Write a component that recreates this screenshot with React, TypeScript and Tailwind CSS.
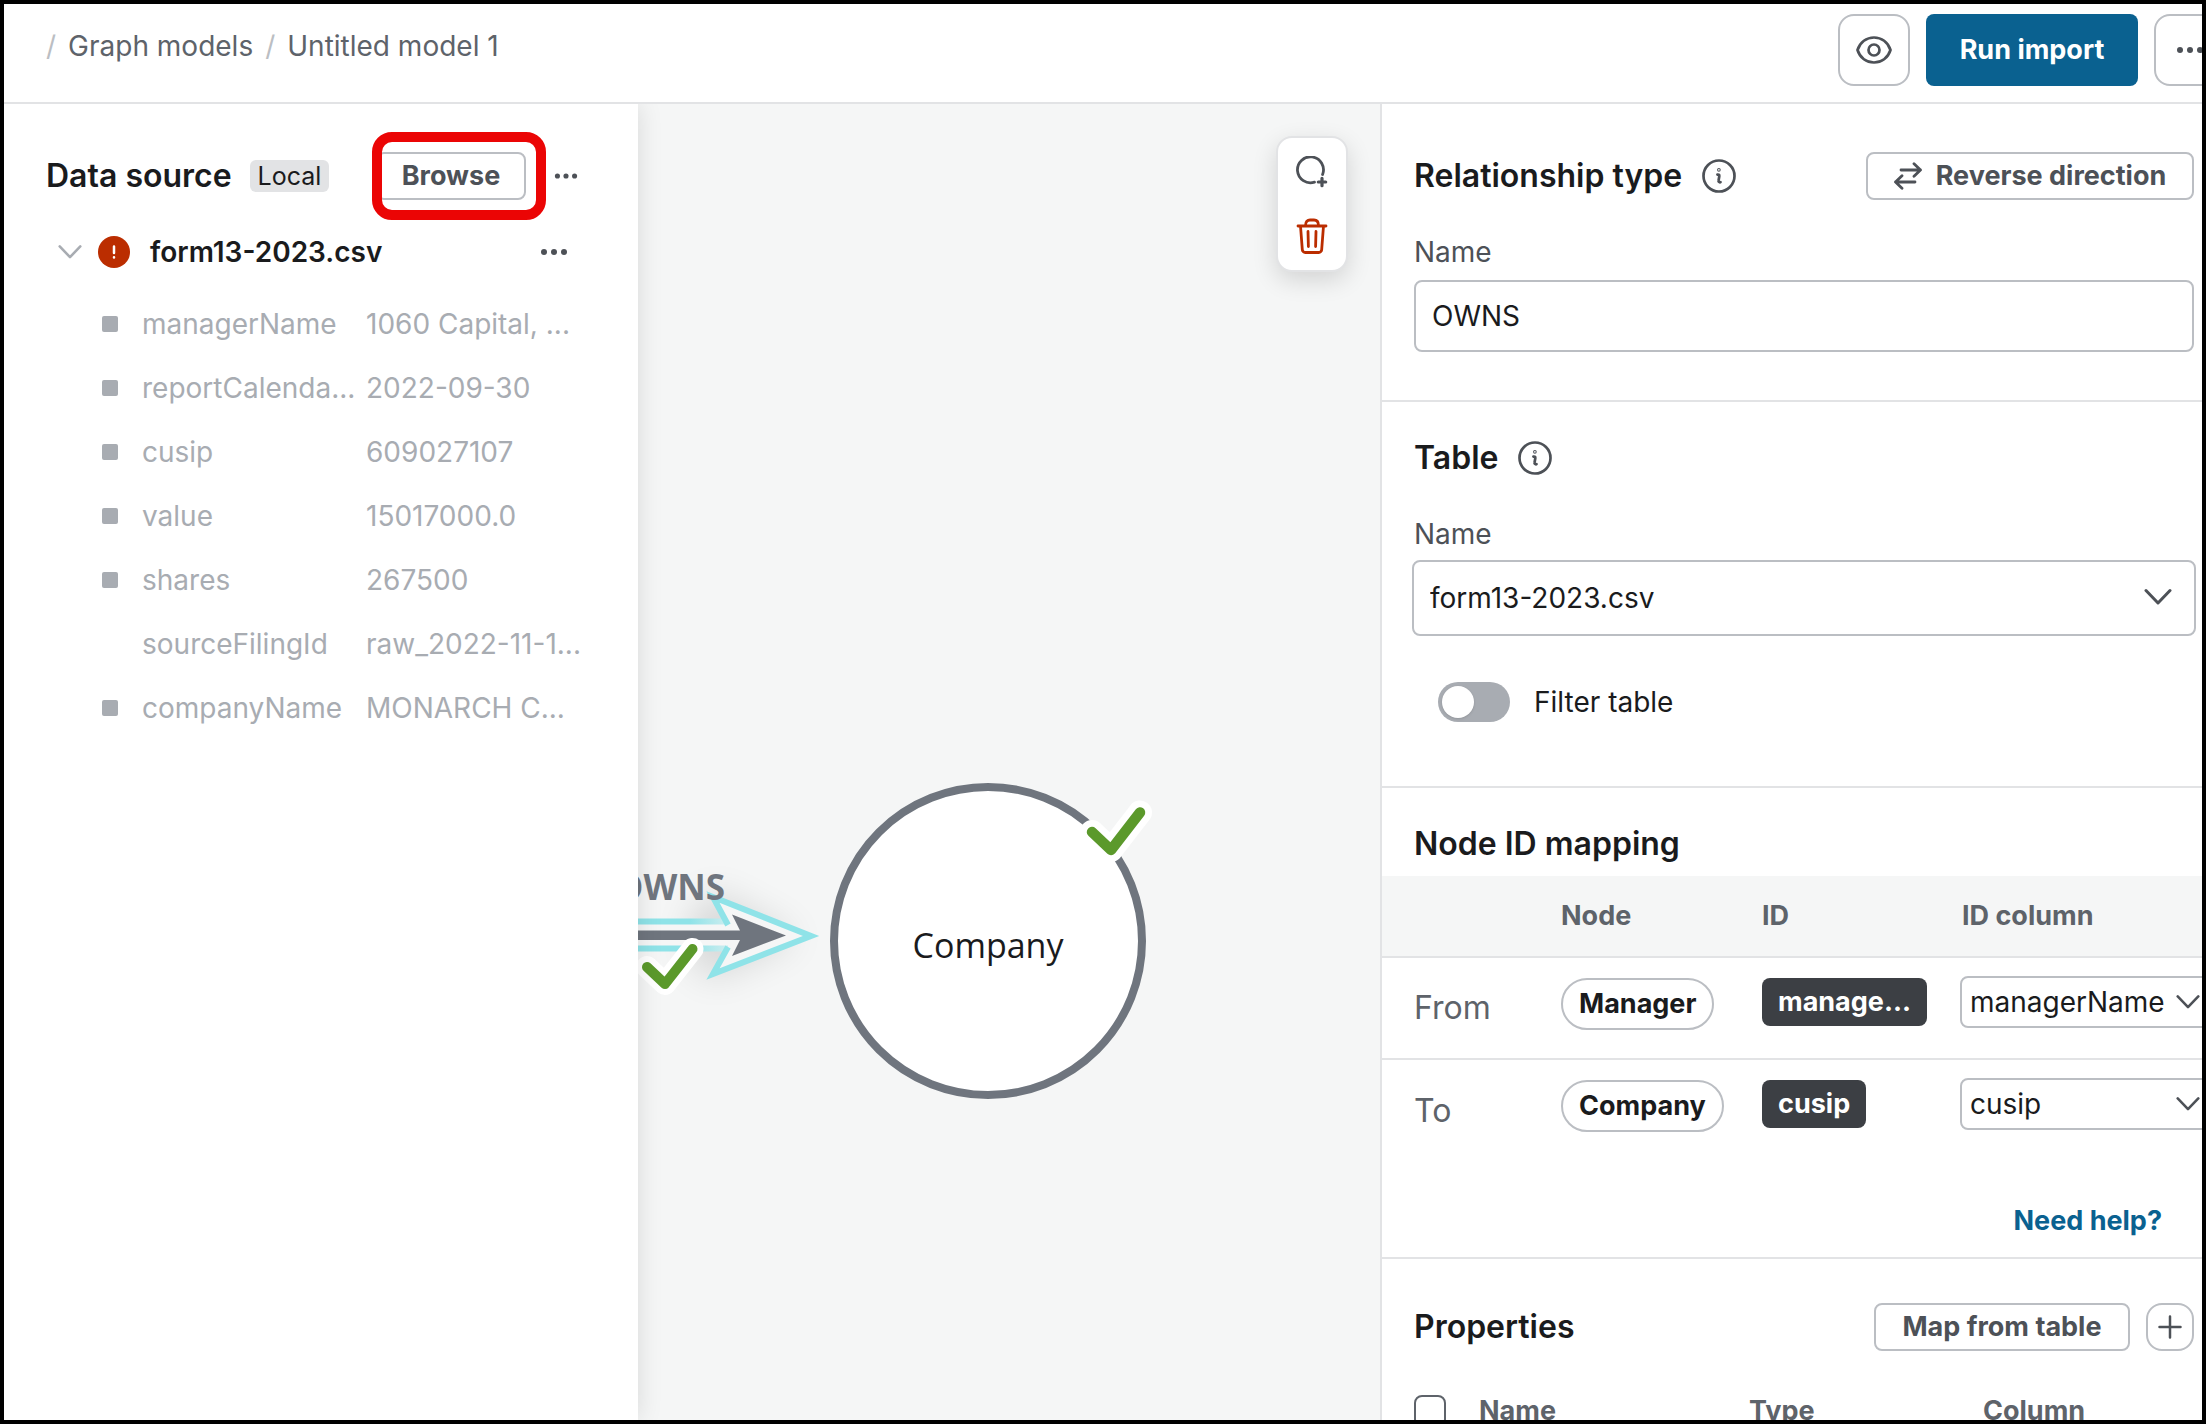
import React from "react";

const columns = [
  { name: "managerName", value: "1060 Capital, ...", mapped: true },
  { name: "reportCalenda...", value: "2022-09-30", mapped: true },
  { name: "cusip", value: "609027107", mapped: true },
  { name: "value", value: "15017000.0", mapped: true },
  { name: "shares", value: "267500", mapped: true },
  { name: "sourceFilingId", value: "raw_2022-11-1...", mapped: false },
  { name: "companyName", value: "MONARCH C...", mapped: true },
];

const mappings = [
  { end: "From", node: "Manager", id: "manage...", column: "managerName" },
  { end: "To", node: "Company", id: "cusip", column: "cusip" },
];

function Dots({ className }: { className: string }) {
  return (
    <svg viewBox="0 0 28 8" className={className} fill="currentColor" aria-hidden="true">
      <circle cx="4" cy="4" r="3" />
      <circle cx="14" cy="4" r="3" />
      <circle cx="24" cy="4" r="3" />
    </svg>
  );
}

function Chevron({ className }: { className: string }) {
  return (
    <svg viewBox="0 0 28 18" className={className} fill="none" stroke="currentColor" strokeWidth="3" strokeLinecap="round" strokeLinejoin="round" aria-hidden="true">
      <path d="M2 2.500l12 12.500 12-12.500" />
    </svg>
  );
}

function InfoButton({ label }: { label: string }) {
  return (
    <button type="button" aria-label={label} className="text-[#4d5157]">
      <svg viewBox="0 0 34 34" className="size-[34px]" fill="none" stroke="currentColor" strokeWidth="2.700" strokeLinecap="round" strokeLinejoin="round" aria-hidden="true">
        <circle cx="17" cy="17" r="15.500" />
        <path d="M15.400 15.600c1.500-.3 2.100.4 1.900 1.600l-.7 4c-.3 1.500.5 2.400 1.900 2" />
        <circle cx="16.900" cy="10.800" r="0.500" />
      </svg>
    </button>
  );
}

function Header() {
  return (
    <header className="relative z-20 flex h-[100px] shrink-0 items-start justify-between border-b-2 border-[#e2e3e5] bg-white pt-2.5">
      <nav aria-label="Breadcrumb" className="flex gap-3 pt-3 pl-[42px] text-[28px] leading-10 text-[#5e636a]">
        <span className="text-[#bbbec3]">/</span>
        <a href="#models">Graph models</a>
        <span className="text-[#bbbec3]">/</span>
        <a href="#model">Untitled model 1</a>
      </nav>
      <div className="-mr-6 flex gap-4">
        <button type="button" aria-label="Preview" className="flex size-[72px] items-center justify-center rounded-2xl border-2 border-[#bbbec3] text-[#4d5157]">
          <svg viewBox="0 0 36 28" className="h-7 w-9" fill="none" stroke="currentColor" strokeWidth="2.700" strokeLinejoin="round" aria-hidden="true">
            <path d="M1.500 14C4 6 10.500 1.500 18 1.500S32 6 34.500 14C32 22 25.500 26.500 18 26.500S4 22 1.500 14z" />
            <circle cx="18" cy="14" r="5.500" />
          </svg>
        </button>
        <button type="button" className="h-[72px] w-[212px] rounded-lg bg-[#0a6190] text-[27px] font-bold text-white">
          Run import
        </button>
        <button type="button" aria-label="More actions" className="flex size-[72px] items-center justify-center rounded-2xl border-2 border-[#bbbec3] text-[#4d5157]">
          <Dots className="h-2 w-7" />
        </button>
      </div>
    </header>
  );
}

function DataSource() {
  return (
    <aside className="z-10 w-[634px] shrink-0 bg-white pt-12 pl-[42px] shadow-[0_0_24px_rgba(0,0,0,0.12)]">
      <div className="flex h-12 items-center">
        <h2 className="text-[32px] font-semibold text-[#1a1b1d]">Data source</h2>
        <span className="ml-[18px] rounded-md bg-[#e2e3e5] px-2 text-[25px] leading-8 text-[#1a1b1d]">Local</span>
        <div className="relative ml-auto">
          <button type="button" className="h-12 w-[150px] rounded-lg border-2 border-[#bbbec3] text-[27px] leading-8 font-bold text-[#4d5157]">
            Browse
          </button>
          <div className="pointer-events-none absolute -inset-x-1 -inset-y-5 -right-5 rounded-[20px] border-10 border-[#eb0505]" />
        </div>
        <button type="button" aria-label="Data source actions" className="mr-[60px] ml-7 text-[#4d5157]">
          <Dots className="h-2 w-6" />
        </button>
      </div>
      <div className="mt-7 flex h-12 items-center">
        <button type="button" aria-label="Collapse file" className="ml-3 text-[#a8acb2]">
          <Chevron className="h-4 w-6" />
        </button>
        <span role="img" aria-label="Error" className="ml-4 flex size-8 items-center justify-center rounded-full bg-[#bb2d00]">
          <svg viewBox="0 0 4 14" className="h-3.5 w-1" stroke="white" strokeWidth="2.500" strokeLinecap="round" aria-hidden="true">
            <path d="M2 1.500v6.500M2 12.300v.2" />
          </svg>
        </span>
        <span className="ml-5 text-[28px] font-semibold text-[#1a1b1d]">form13-2023.csv</span>
        <button type="button" aria-label="File actions" className="mr-[70px] ml-auto text-[#4d5157]">
          <Dots className="h-2 w-7" />
        </button>
      </div>
      <ul className="mt-4 text-[28px] text-[#a8acb2]">
        {columns.map((c) => (
          <li key={c.name} className="grid h-16 grid-cols-[40px_224px_1fr] items-center pl-14 whitespace-nowrap">
            <span className={c.mapped ? "size-4 rounded-[2px] bg-[#a8acb2]" : "size-4"} />
            <span>{c.name}</span>
            <span>{c.value}</span>
          </li>
        ))}
      </ul>
    </aside>
  );
}

function Canvas() {
  return (
    <main className="relative min-w-0 flex-1 overflow-hidden bg-[#f5f6f6]">
      <svg viewBox="638 104 742 1316" className="absolute top-0 left-0 h-[1316px] w-[742px]" role="img" aria-label="OWNS relationship pointing to Company">
        <defs>
          <filter id="soft" x="-50%" y="-100%" width="200%" height="300%">
            <feGaussianBlur stdDeviation="18" />
          </filter>
          <linearGradient id="fade" gradientUnits="userSpaceOnUse" x1="690" y1="0" x2="732" y2="0">
            <stop offset="0" stopColor="#8fe3e8" />
            <stop offset="1" stopColor="#d3eef0" />
          </linearGradient>
        </defs>
        <path d="M690 920L712 890 800 938 712 980 690 960z" fill="#000" opacity="0.12" filter="url(#soft)" />
        <path d="M600 918.500H732V951.500H600z" fill="url(#fade)" />
        <path d="M728 925L713 897 811 936 713 974 728 947z" fill="#f5f6f6" />
        <path d="M600 924.500H740V945.500H600z" fill="#f5f6f6" />
        <path d="M728 925L713 897 811 936 713 974 728 947" fill="none" stroke="#8fe3e8" strokeWidth="6" strokeMiterlimit="10" />
        <path d="M600 930.500H740L732 914.500 786 935.500 732 956 740 940H600z" fill="#6f757e" />
        <text x="725" y="900" textAnchor="end" fontFamily="'Open Sans'" fontWeight="700" fontSize="35" fill="#6f757e">OWNS</text>
        <circle cx="988" cy="941" r="154" fill="#fff" stroke="#6f757e" strokeWidth="8" />
        <text x="988" y="958" textAnchor="middle" fontFamily="'Open Sans'" fontSize="34" fill="#1a1b1d">Company</text>
        <g fill="none" strokeLinecap="round" strokeLinejoin="round">
          <path d="M1092 832L1111 850 1140 812.500" stroke="#fff" strokeWidth="24" />
          <path d="M1092 832L1111 850 1140 812.500" stroke="#5b992b" strokeWidth="10.500" />
          <path d="M647 967L665 984 692.500 949" stroke="#fff" strokeWidth="22" />
          <path d="M647 967L665 984 692.500 949" stroke="#5b992b" strokeWidth="10" />
        </g>
      </svg>
      <div className="absolute top-8 right-8 flex h-[136px] w-[72px] flex-col items-center rounded-2xl border-2 border-[#e2e3e5] bg-white pt-0.5 shadow-[0_8px_24px_rgba(0,0,0,0.14)]">
        <button type="button" aria-label="Add node" className="flex size-16 items-center justify-center text-[#4d5157]">
          <svg viewBox="0 0 32 32" className="size-8" fill="none" stroke="currentColor" strokeWidth="2.800" strokeLinecap="round" aria-hidden="true">
            <path d="M18.500 26.200A13 13 0 1 1 26.600 18.500" />
            <path d="M26 22.300v7.400M22.300 26h7.400" strokeWidth="3.200" />
          </svg>
        </button>
        <button type="button" aria-label="Delete" className="flex size-16 items-center justify-center text-[#bb2d00]">
          <svg viewBox="0 0 32 36" className="h-9 w-8" fill="none" stroke="currentColor" strokeWidth="2.800" strokeLinecap="round" strokeLinejoin="round" aria-hidden="true">
            <path d="M2 8h28M4.500 8l1.800 23.500A3 3 0 0 0 9.300 34.500h13.400a3 3 0 0 0 3-3L27.500 8M9.500 7.500c0-4 2-5.500 4.500-5.500h4c2.500 0 4.500 1.500 4.500 5.500M12 13.500l.4 15M20 13.500l-.4 15" />
          </svg>
        </button>
      </div>
    </main>
  );
}

const outlineButton = "h-12 rounded-lg border-2 border-[#bbbec3] text-[27px] leading-8 font-bold text-[#4d5157]";

function Details() {
  return (
    <aside className="w-[822px] shrink-0 overflow-hidden border-l-2 border-[#e2e3e5] bg-white text-[28px] text-[#1a1b1d]">
      <section className="h-[298px] border-b-2 border-[#e2e3e5] pt-12 pr-2 pl-8">
        <div className="flex h-12 items-center gap-5">
          <h2 className="text-[32px] font-semibold">Relationship type</h2>
          <InfoButton label="About relationship type" />
          <button type="button" className={`${outlineButton} ml-auto flex w-[328px] items-center justify-center gap-3.5`}>
            <svg viewBox="0 0 28 28" className="size-7" fill="none" stroke="currentColor" strokeWidth="2.800" strokeLinecap="round" strokeLinejoin="round" aria-hidden="true">
              <path d="M7 8h19.500M20 1.700L26.500 8 20 14.300M21 20H1.500M8 13.700L1.500 20 8 26.300" />
            </svg>
            Reverse direction
          </button>
        </div>
        <label htmlFor="rel-name" className="mt-8 block leading-10 text-[#4d5157]">Name</label>
        <input id="rel-name" defaultValue="OWNS" className="mt-2 h-[72px] w-full rounded-lg border-2 border-[#bbbec3] px-4" />
      </section>

      <section className="h-[386px] border-b-2 border-[#e2e3e5] pt-8 pr-1.5 pl-[30px]">
        <div className="flex h-12 items-center gap-5 pl-0.5">
          <h2 className="text-[32px] font-semibold">Table</h2>
          <InfoButton label="About table" />
        </div>
        <label htmlFor="table-name" className="mt-8 block pl-0.5 leading-10 text-[#4d5157]">Name</label>
        <div className="relative mt-1.5">
          <select id="table-name" className="h-[76px] w-full appearance-none rounded-lg border-2 border-[#bbbec3] px-4">
            <option>form13-2023.csv</option>
          </select>
          <Chevron className="pointer-events-none absolute top-7 right-6 h-[18px] w-7 text-[#4d5157]" />
        </div>
        <label className="mt-11 flex h-11 w-fit items-center gap-6 pl-[26px]">
          <input type="checkbox" role="switch" className="h-10 w-[72px] appearance-none rounded-full bg-[#a8acb2] before:mt-1 before:ml-1 before:block before:size-8 before:rounded-full before:bg-white before:shadow-sm" />
          Filter table
        </label>
      </section>

      <section className="border-b-2 border-[#e2e3e5] pt-8">
        <h2 className="pb-2 pl-8 text-[32px] leading-[48px] font-semibold">Node ID mapping</h2>
        <table className="w-full table-fixed border-collapse text-left">
          <thead>
            <tr className="h-[81px] border-b-2 border-[#e2e3e5] bg-[#f5f6f6] text-[27px] text-[#5e636a]">
              <th className="w-[179px]"><span className="sr-only">End</span></th>
              <th className="w-[201px] font-bold">Node</th>
              <th className="w-[200px] font-bold">ID</th>
              <th className="font-bold">ID column</th>
            </tr>
          </thead>
          <tbody>
            {mappings.map((m) => (
              <tr key={m.end} className="h-[102px] border-[#e2e3e5] first:border-b-2">
                <th className="pl-8 text-[32px] font-normal text-[#5e636a]">{m.end}</th>
                <td className="pt-5 align-top">
                  <span className="flex h-[52px] w-fit items-center rounded-[26px] border-2 border-[#bbbec3] px-4 text-[27px] font-bold">{m.node}</span>
                </td>
                <td className="pt-5 align-top">
                  <span className="flex h-12 w-fit items-center rounded-lg bg-[#3c3f44] px-4 text-[27px] font-bold text-white">{m.id}</span>
                </td>
                <td className="pt-[18px] align-top">
                  <div className="relative -ml-0.5 w-[260px]">
                    <select aria-label={`${m.end} ID column`} defaultValue={m.column} className="block h-[52px] w-full appearance-none rounded-lg border-2 border-[#bbbec3] pl-2">
                      <option>{m.column}</option>
                    </select>
                    <Chevron className="pointer-events-none absolute top-[18px] left-[216px] h-4 w-6 text-[#4d5157]" />
                  </div>
                </td>
              </tr>
            ))}
          </tbody>
        </table>
        <div className="flex justify-end pt-[38px] pr-10 pb-3.5 leading-[44px]">
          <a href="#help" className="text-[27px] font-bold text-[#0a6190]">Need help?</a>
        </div>
      </section>

      <section className="pt-11 pr-2 pl-8">
        <div className="flex h-12 items-center">
          <h2 className="text-[32px] font-semibold">Properties</h2>
          <button type="button" className={`${outlineButton} mr-4 ml-auto w-64`}>Map from table</button>
          <button type="button" aria-label="Add property" className="flex size-12 items-center justify-center rounded-2xl border-2 border-[#bbbec3] text-[#4d5157]">
            <svg viewBox="0 0 24 24" className="size-6" stroke="currentColor" strokeWidth="2.500" strokeLinecap="round" aria-hidden="true">
              <path d="M12 1.500v21M1.500 12h21" />
            </svg>
          </button>
        </div>
        <table className="mt-9 w-full table-fixed text-left text-[27px] text-[#5e636a]">
          <thead>
            <tr className="h-12">
              <th className="w-[65px]">
                <input type="checkbox" aria-label="Select all properties" className="block size-8 appearance-none rounded-lg border-2 border-[#5e636a]" />
              </th>
              <th className="w-[270px] font-bold">Name</th>
              <th className="w-[234px] font-bold">Type</th>
              <th className="font-bold">Column</th>
            </tr>
          </thead>
        </table>
      </section>
    </aside>
  );
}

export default function App() {
  return (
    <div className="flex h-screen flex-col overflow-hidden border-4 border-black bg-white font-['Inter',sans-serif]">
      <Header />
      <div className="flex min-h-0 flex-1">
        <DataSource />
        <Canvas />
        <Details />
      </div>
    </div>
  );
}
